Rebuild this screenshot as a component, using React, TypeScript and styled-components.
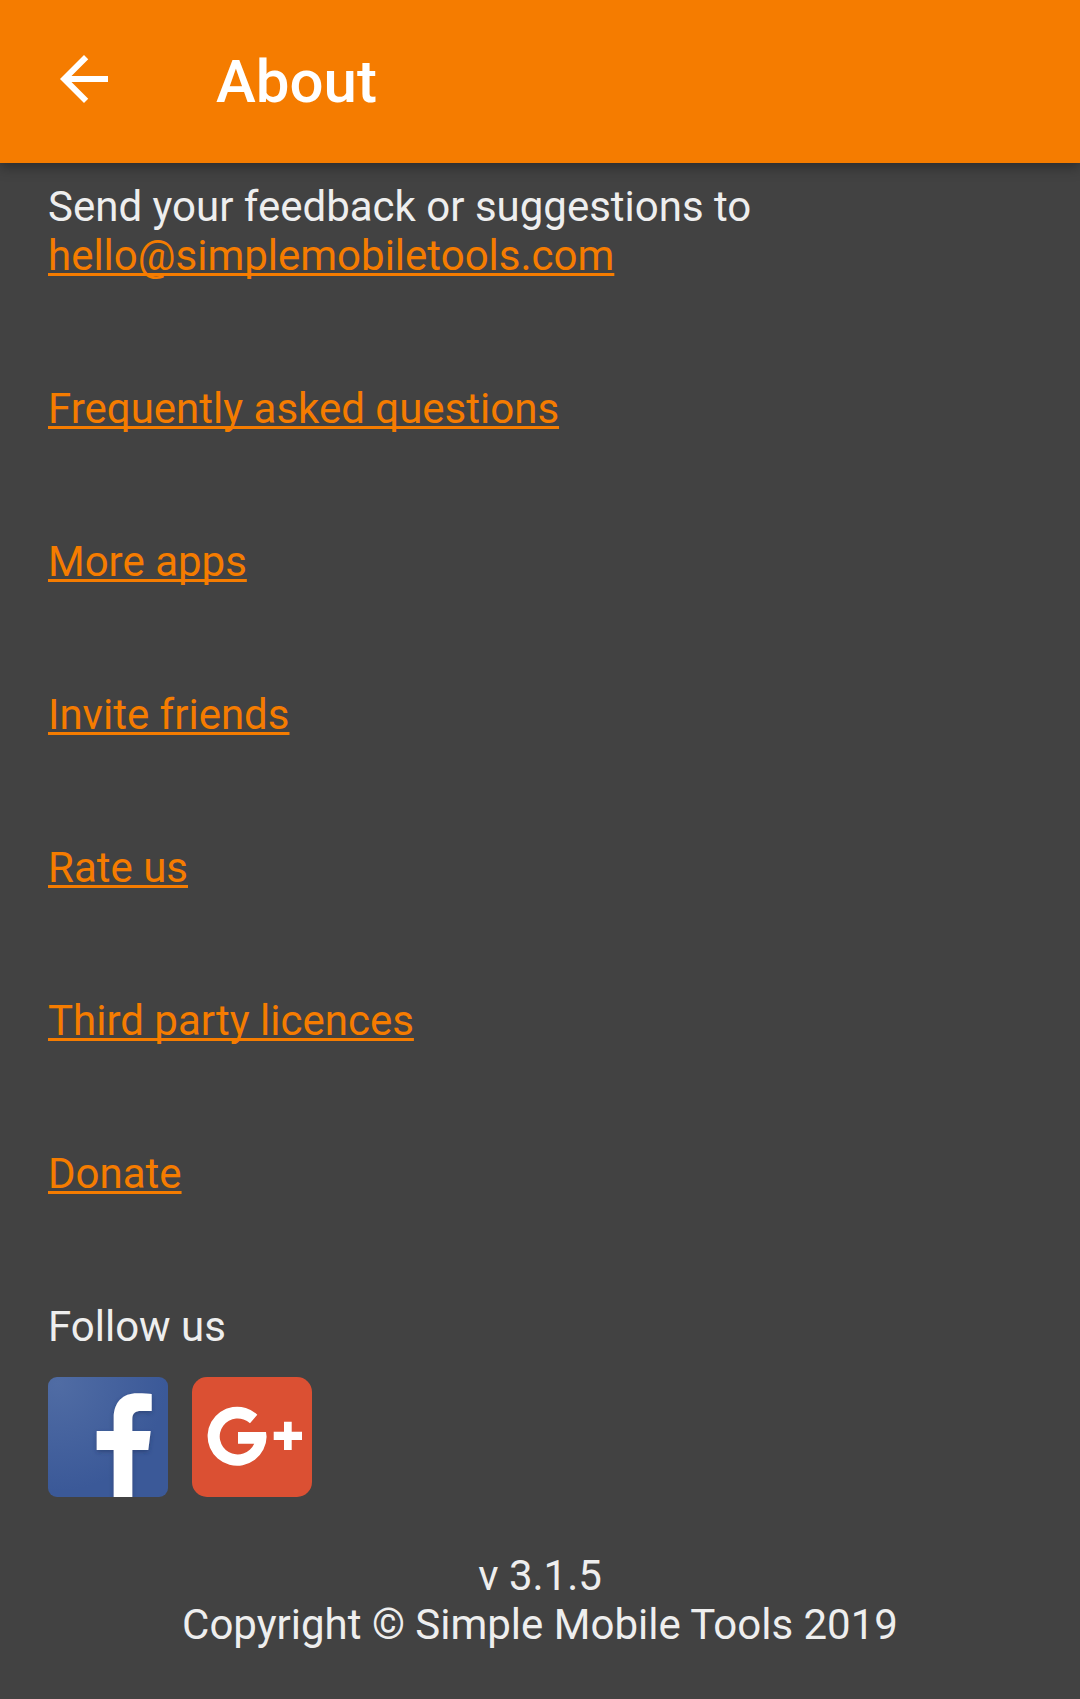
import React from "react";
import styled, { createGlobalStyle } from "styled-components";

const GlobalStyle = createGlobalStyle`
  *, *::before, *::after { box-sizing: border-box; }
  body {
    margin: 0;
    background: #424242;
    color: #eeeeee;
    font-family: Roboto, "Noto Sans", sans-serif;
    font-size: 42px;
    line-height: 49px;
  }
`;

const Toolbar = styled.header`
  display: flex;
  align-items: flex-start;
  gap: 96px;
  padding: 43px 48px;
  background: #f57c00;
  color: #ffffff;
  box-shadow: 0 4px 12px rgba(0, 0, 0, 0.35);
`;

const BackButton = styled.button`
  display: flex;
  width: 72px;
  height: 72px;
  padding: 0;
  border: 0;
  background: none;
  color: inherit;
`;

const Title = styled.h1`
  margin: 0;
  font-size: 60px;
  line-height: 77px;
  font-weight: 500;
`;

const Content = styled.main`
  display: flex;
  flex-direction: column;
  align-items: flex-start;
  padding: 19px 48px 48px;
`;

const Text = styled.p`
  margin: 0;
`;

const OrangeLink = styled.a`
  color: #f57c00;
  text-decoration: underline;
  text-decoration-thickness: 3px;
  text-decoration-skip-ink: none;
  text-underline-offset: 3px;
`;

const Links = styled.nav`
  display: flex;
  flex-direction: column;
  align-items: flex-start;
  gap: 104px;
  padding: 104px 0;
`;

const Social = styled.div`
  display: flex;
  gap: 24px;
  padding: 26px 0 54px;
`;

const SocialLink = styled.a`
  display: flex;
  width: 120px;
  height: 120px;
`;

const Footer = styled.footer`
  align-self: stretch;
  text-align: center;
`;

const links = ["Frequently asked questions", "More apps", "Invite friends", "Rate us", "Third party licences", "Donate"];

export default function App() {
  return (
    <>
      <GlobalStyle />
      <Toolbar>
        <BackButton type="button" aria-label="Back">
          <svg viewBox="0 0 24 24" width="72" height="72" fill="currentColor">
            <path d="M20 11H7.83l5.59-5.59L12 4l-8 8 8 8 1.41-1.41L7.83 13H20v-2z" />
          </svg>
        </BackButton>
        <Title>About</Title>
      </Toolbar>
      <Content>
        <Text>
          Send your feedback or suggestions to
          <br />
          <OrangeLink href="mailto:hello@simplemobiletools.com">hello@simplemobiletools.com</OrangeLink>
        </Text>
        <Links>
          {links.map((label) => (
            <OrangeLink key={label} href="#">{label}</OrangeLink>
          ))}
        </Links>
        <Text>Follow us</Text>
        <Social>
          <SocialLink href="#" aria-label="Facebook">
            <svg viewBox="0 0 120 120" width="120" height="120">
              <defs>
                <radialGradient id="fbShine" cx="0.08" cy="0.05" r="0.9">
                  <stop offset="0" stopColor="#506ca4" />
                  <stop offset="1" stopColor="#3b5998" />
                </radialGradient>
                <filter id="fbShadow" x="-20%" y="-20%" width="140%" height="140%">
                  <feDropShadow dx="0" dy="2" stdDeviation="2" floodColor="#1d2f5c" floodOpacity="0.5" />
                </filter>
                <clipPath id="fbTile">
                  <rect width="120" height="120" rx="9" />
                </clipPath>
              </defs>
              <g clipPath="url(#fbTile)">
                <rect width="120" height="120" fill="url(#fbShine)" />
                <path
                  fill="#fff"
                  filter="url(#fbShadow)"
                  d="M65.7 122V73H48.7V54H65.7V41C65.7 25 75 16.3 89 16.3C96 16.3 101 16.5 103.7 17V34H93C87 34 84.3 36.5 84.3 42V54H102.7L100.3 73H84.3V122Z"
                />
              </g>
            </svg>
          </SocialLink>
          <SocialLink href="#" aria-label="Google Plus">
            <svg viewBox="0 0 120 120" width="120" height="120">
              <rect width="120" height="120" rx="15" fill="#db5033" />
              <path
                fill="#fff"
                d="M65.3 37.7A29.5 29.5 0 1 0 74.6 59.7L74 55H46V66.7H62.2A18 18 0 1 1 58 46.3Z"
              />
              <path fill="#fff" d="M92 44.7h7.7v10H110V63H99.7v10H92V63H81.7v-8.3H92z" />
            </svg>
          </SocialLink>
        </Social>
        <Footer>
          <Text>v 3.1.5</Text>
          <Text>Copyright © Simple Mobile Tools 2019</Text>
        </Footer>
      </Content>
    </>
  );
}
